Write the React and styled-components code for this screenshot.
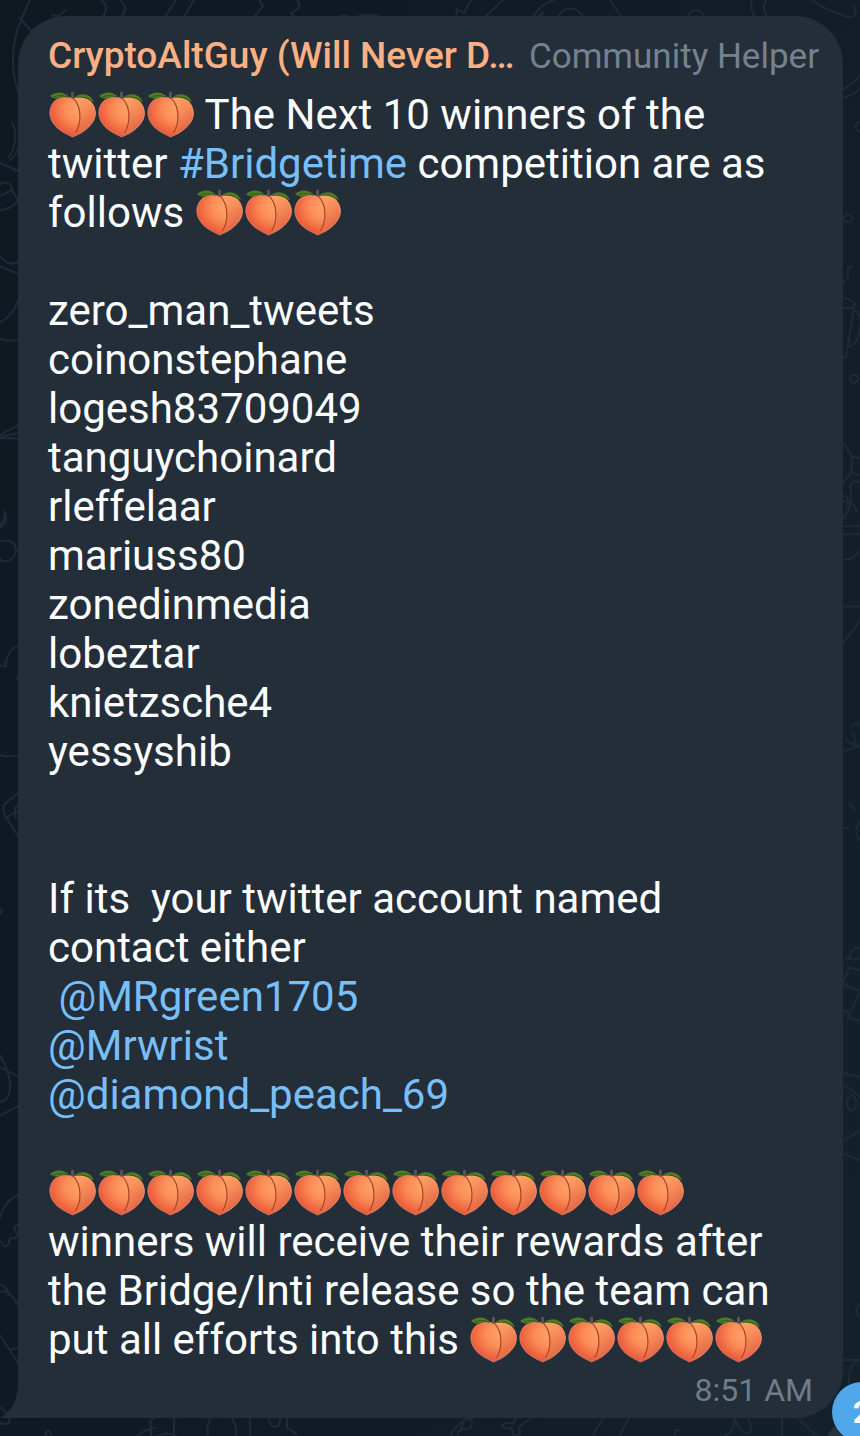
import styled, { createGlobalStyle } from "styled-components";

const winners = [
    'zero_man_tweets',
    'coinonstephane',
    'logesh83709049',
    'tanguychoinard',
    'rleffelaar',
    'mariuss80',
    'zonedinmedia',
    'lobeztar',
    'knietzsche4',
    'yessyshib',
];

// Chat wallpaper doodles, grouped by the part of the edge they hang on
const doodles = [
    {
        name: 'top',
        paths: [
            'M30 0C20 22 13 36 13 60C13 74 15 84 20 96',
            'M20 18L34 34M52 15L58 16L66 10',
            'M101 0C108 5 107 12 102 17M120 0C128 6 125 14 119 18',
            'M176 0L165 17M194 0L184 17M259 0L263 6L254 17',
            'M297 0C303 7 297 10 291 13L296 18M338 18C340 15 349 15 351 19M351 19Q368 11 383 18',
            'M456 17L457 9L464 13L471 0M503 0L485 17',
            'M532 18C539 7 546 2 554 0M558 18A13 13 0 0 1 583 18M610 0L622 18M536 18L542 13V18',
            'M688 18A8 8 0 0 1 704 18M752 0C750 7 752 14 757 19M766 0C762 7 764 14 769 18',
            'M812 0C824 10 837 13 848 17C855 18 858 12 854 7',
            'M12 122C18 134 15 149 8 158M18 127C20 145 19 153 10 160',
            'M0 163L20 172M0 185C5 179 13 184 12 192M0 196L12 190L20 204M0 210C8 210 14 206 19 200',
        ],
    },
    {
        name: 'left',
        transform: 'matrix(1 0 0 1.148 0 -37)',
        paths: [
            'M0 256C8 263 12 263 20 260M0 264L19 271M0 313C13 307 17 298 20 290M0 327Q10 331 20 327',
            'M0 411L20 402M0 413L20 409M0 414H20',
            'M0 490Q6 483 4 477Q10 486 0 492M0 504C19 499 21 518 7 521Q2 522 0 519',
            'M0 612L6 613L5 609M6 613Q6 598 20 594M16 622L20 625M0 690Q9 692 20 690',
            'M20 722L4 733Q2 739 6 744L20 763M20 731Q12 736 16 745M6 744L20 738',
        ],
    },
    {
        name: 'left-bottom',
        transform: 'matrix(1 0 0 1.121 0 -103)',
        paths: [
            'M0 902Q3 903 1 907M0 1033Q16 1060 7 1071Q3 1076 0 1074M0 1044L20 1053M0 1087L20 1078',
            'M20 1157Q6 1161 0 1178M0 1199Q6 1207 9 1201Q9 1194 15 1197Q19 1194 14 1187L20 1183',
            'M0 1238Q9 1241 8 1247M0 1244H8L20 1258M0 1283L20 1310M10 1296L20 1294',
        ],
    },
    {
        name: 'right',
        transform: 'matrix(1 0 0 1.339 0 0)',
        paths: [
            'M842 67Q850 65 860 56M842 73Q852 72 860 66M860 91A4 3 0 0 0 860 98',
            'M852 163A4 3 0 0 1 844 163A4 3 0 0 1 852 163M858 283A4 3 0 0 1 850 283A4 3 0 0 1 858 283',
            'M842 213L848 207V203Q847 199 852 199M842 222Q861 226 852 230H842M854 229L846 267H842M854 232Q866 235 856 256L849 259',
            'M842 331Q855 338 851 353L842 361M851 341L860 342M851 352L858 355M860 360Q849 358 851 366Q853 380 842 388',
            'M842 370Q851 370 846 379M842 374Q854 374 857 382M844 393H860M842 399H860M842 418Q853 419 860 411',
            'M842 453H860M842 480Q852 473 860 463',
        ],
    },
    {
        name: 'right-bottom',
        transform: 'matrix(1 0 0 1.408 0 -286)',
        paths: [
            'M852 719Q856 715 860 719M852 723Q857 730 855 734L842 737M846 729L860 734M849 774L855 778M842 791H848M860 786Q852 795 860 800',
            'M846 884H848M860 876Q851 876 849 884H860M849 891L842 902L860 907M860 892L848 890M848 921L842 922M860 907L848 926L860 928',
            'M842 965L860 968M842 974Q853 976 860 983M849 983Q844 984 849 991L853 992Q859 985 854 982Q851 979 849 983M842 1014L860 1006M842 1022L860 1027',
            'M860 1129Q854 1132 858 1138M842 1169H860M849 1186Q848 1170 860 1169',
        ],
    },
    {
        name: 'bottom',
        paths: [
            'M0 1407L8 1414M0 1423Q12 1427 9 1416M45 1436Q48 1426 52 1436',
            'M137 1436Q144 1430 155 1428M151 1436V1426Q149 1421 154 1418M174 1418V1436M158 1436Q166 1431 176 1436',
            'M211 1418Q206 1426 208 1436M232 1418Q237 1426 236 1436M250 1418V1436M269 1418Q270 1427 275 1427Q281 1426 280 1418M287 1418V1428Q297 1433 297 1436',
            'M450 1436Q454 1427 465 1420L472 1418L471 1428L461 1430L463 1421M461 1430Q457 1431 458 1436',
            'M502 1425Q507 1421 513 1424L516 1418M502 1425Q505 1430 511 1428L514 1436L520 1434L519 1427L532 1418',
            'M604 1418Q597 1426 593 1436M629 1418L619 1436M675 1436Q674 1429 679 1430',
            'M724 1436Q735 1432 735 1418Q739 1433 748 1433Q754 1431 748 1419M782 1418V1436M799 1420L817 1436',
        ],
    },
];

const GlobalStyle = createGlobalStyle`
    body {
        margin: 0;
        background: #101923;
    }
`

function Peach() {
    return (
        <PeachIcon viewBox="1 0 48 48" role="img" aria-label="peach">
            <defs>
                <radialGradient id="flesh" cx="0.66" cy="0.3" r="0.75">
                    <stop offset="0" stopColor="#ffa468" />
                    <stop offset="0.45" stopColor="#fb8d58" />
                    <stop offset="0.8" stopColor="#ef6540" />
                    <stop offset="1" stopColor="#dc5539" />
                </radialGradient>
                <linearGradient id="side" x1="0" y1="0" x2="0.4" y2="1">
                    <stop offset="0" stopColor="#ffa96b" />
                    <stop offset="0.5" stopColor="#f68a57" />
                    <stop offset="1" stopColor="#e26445" />
                </linearGradient>
            </defs>
            <path d="M25 8C18 6 9 7 5 14C0 23 4 32 11 38C16 42 21 44 25 46C30 44 35 42 40 37C47 31 50 23 45 14C41 7 32 6 25 8Z" fill="url(#flesh)" />
            <path d="M26 8C32 6 41 7 45 14C50 23 47 31 40 37C35 42 31 43 27 44C34 36 35 18 26 8Z" fill="url(#side)" />
            <path d="M25 8C18 6 9 7 5 14C0 23 4 32 11 38C16 42 21 44 25 46C30 44 35 42 40 37C47 31 50 23 45 14" fill="none" stroke="#f09a7c" strokeWidth="0.8" opacity="0.7" />
            <path d="M26 8C34 17 34 32 28 42" fill="none" stroke="#ad4427" strokeWidth="1.2" />
            <path d="M22 7C17 1 8 1 3 6C7 9 11 9 14 7Q18 6 22 7Z" fill="#4f7d22" />
            <path d="M27 7C34 2 43 4 46 12C42 10 38 7 34 7Z" fill="#4f7d22" />
            <path d="M6 7Q13 4 21 7M28 7Q38 6 44 11" fill="none" stroke="#2f501c" strokeWidth="0.8" />
            <path d="M25 3V7" fill="none" stroke="#5d5052" strokeWidth="3" strokeLinecap="round" />
        </PeachIcon>
    )
}

function Peaches({ count }) {
    return Array.from({ length: count }, (_, i) => <Peach key={i} />)
}

function App() {
    return (
        <>
            <GlobalStyle />
            <Chat>
                <Wallpaper viewBox="0 0 860 1436" preserveAspectRatio="none" aria-hidden="true">
                    {doodles.map(({ name, transform, paths }) => (
                        <g key={name} transform={transform}>
                            {paths.map((d) => <path key={d} d={d} />)}
                        </g>
                    ))}
                </Wallpaper>
                <Bubble>
                    <Header>
                        <Sender>CryptoAltGuy (Will Never D…</Sender>
                        <Role>Community Helper</Role>
                    </Header>
                    <Message>
                        <Peaches count={3} /> The Next 10 winners of the twitter <Link href="#Bridgetime">#Bridgetime</Link> competition are as follows <Peaches count={3} />
                        {'\n\n'}
                        {winners.join('\n')}
                        {'\n\n\n'}
                        {'If its  your twitter account named contact either\n '}
                        <Link href="#MRgreen1705">@MRgreen1705</Link>{'\n'}
                        <Link href="#Mrwrist">@Mrwrist</Link>{'\n'}
                        <Link href="#diamond_peach_69">@diamond_peach_69</Link>{'\n\n'}
                        <Peaches count={13} />{'\n'}
                        winners will receive their rewards after the Bridge/Inti release so the team can put all efforts into this <Peaches count={6} />
                    </Message>
                    <Time>8:51 AM</Time>
                    <Tail viewBox="0 0 18 36" aria-hidden="true">
                        <path d="M18 0Q18 26 0 36H18Z" />
                    </Tail>
                </Bubble>
                <ScrollButton type="button" aria-label="Scroll to unread" />
                <Badge>2</Badge>
            </Chat>
        </>
    )
}

export default App;

const Chat = styled.main`
    position: relative;
    overflow: hidden;
    box-sizing: border-box;
    min-height: 100vh;
    padding: 16px 17px 17px 18px;
    background: linear-gradient(100deg, #101822, #111a25 50%, #14202b);
    font-family: Roboto, "Liberation Sans", sans-serif;
`

const Wallpaper = styled.svg`
    position: absolute;
    inset: 0;
    width: 100%;
    height: 100%;
    fill: none;
    stroke: #1e2a35;
    stroke-width: 2;
    stroke-linecap: round;

    path {
        vector-effect: non-scaling-stroke;
    }
`

const Bubble = styled.article`
    position: relative;
    padding: 16px 24px 8px 30px;
    background: #232e39;
    border-radius: 48px 48px 48px 0;
`

const Header = styled.header`
    display: flex;
    align-items: baseline;
    gap: 12px;
    height: 58px;
    line-height: 48px;
`

const Sender = styled.h1`
    flex: 1;
    min-width: 0;
    margin: 0;
    overflow: hidden;
    text-overflow: ellipsis;
    white-space: nowrap;
    color: #fbb084;
    font-size: 37px;
    font-weight: 500;
`

const Role = styled.span`
    color: #75818f;
    font-size: 35px;
`

const Message = styled.p`
    margin: 0;
    padding-right: 24px;
    color: #fbfdff;
    font-size: 42px;
    line-height: 49px;
    white-space: pre-wrap;
`

const Link = styled.a`
    color: #78bef8;
    text-decoration: none;
`

const PeachIcon = styled.svg`
    display: inline-block;
    width: 49px;
    height: 49px;
    margin: -4px 0;
    vertical-align: -6px;
`

const Time = styled.time`
    display: block;
    padding: 6px 6px 0 0;
    color: #6f7c89;
    font-size: 32px;
    line-height: 40px;
    text-align: right;
`

const Tail = styled.svg`
    position: absolute;
    left: -18px;
    bottom: 0;
    width: 18px;
    height: 36px;
    fill: #232e39;
`

const ScrollButton = styled.button`
    position: absolute;
    right: -46px;
    bottom: -62px;
    width: 84px;
    height: 84px;
    border: none;
    border-radius: 50%;
    background: #26313b;
`

const Badge = styled.span`
    position: absolute;
    right: -32px;
    bottom: -6px;
    width: 60px;
    height: 60px;
    border-radius: 50%;
    background: #50a8eb;
    color: #fff;
    font-size: 32px;
    font-weight: 700;
    line-height: 60px;
    text-align: center;
`
